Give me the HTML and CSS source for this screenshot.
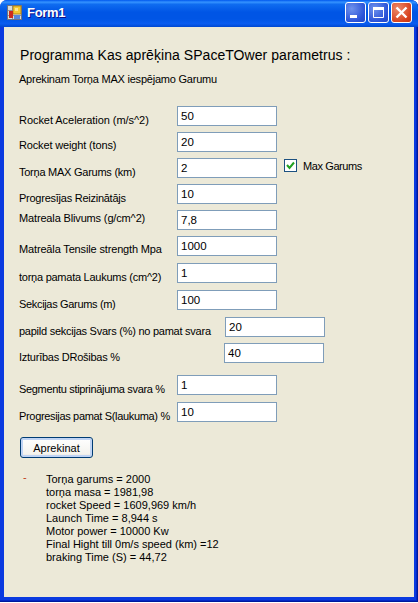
FILE: index.html
```html
<!DOCTYPE html>
<html lang="lv">
<head>
<meta charset="utf-8">
<title>Form1</title>
<link rel="stylesheet" href="styles.css">
</head>
<body>
<div class="window">
  <header class="titlebar">
    <svg class="appicon" width="15" height="15" viewBox="0 0 15 15">
      <rect x="0.5" y="0.5" width="14" height="14" fill="#dcdcd4" stroke="#6f7480"/>
      <path d="M5.5 1v13M1 5.5h4M1 10.5h13M10.5 10v4" stroke="#8c94a0" stroke-width="1" fill="none"/>
      <rect x="6" y="1" width="8" height="8" fill="#f6c832" stroke="#a87c14" stroke-width="0.8"/>
      <rect x="8" y="3" width="3" height="3" fill="#ffe88a"/>
      <rect x="2" y="6" width="4" height="7" fill="#cf2a1c"/>
      <rect x="7" y="10" width="6" height="4" fill="#5a88d8"/>
    </svg>
    <span class="title">Form1</span>
    <div class="controls">
      <button class="ctl" aria-label="Minimize"><svg width="21" height="21" viewBox="0 0 21 21"><rect x="5" y="13" width="7" height="3" fill="#fff"/></svg></button>
      <button class="ctl" aria-label="Maximize"><svg width="21" height="21" viewBox="0 0 21 21"><path d="M5.5 5.5h10v10h-10z" fill="none" stroke="#fff"/><rect x="5" y="5" width="11" height="3" fill="#fff"/></svg></button>
      <button class="ctl close" aria-label="Close"><svg width="21" height="21" viewBox="0 0 21 21"><path d="M5.5 5.5l10 10M15.5 5.5l-10 10" stroke="#fff" stroke-width="2.4" fill="none"/></svg></button>
    </div>
  </header>
  <main class="client">
    <h1 class="heading">Programma Kas aprēķina SPaceTOwer parametrus :</h1>
    <p class="sub">Aprekinam Torņa MAX iespējamo Garumu</p>

    <div class="row first"><label class="lab t1">Rocket Aceleration (m/s^2)</label><input class="field" value="50"></div>
    <div class="row"><label class="lab up1 t2">Rocket weight (tons)</label><input class="field" value="20"></div>
    <div class="row"><label class="lab t3">Torņa MAX Garums (km)</label><input class="field" value="2">
      <span class="check"><span class="box"><svg width="11" height="11" viewBox="0 0 11 11"><path d="M2 5l2.5 3L9 2.5" fill="none" stroke="#21a121" stroke-width="2"/></svg></span><span class="checklab">Max Garums</span></span>
    </div>
    <div class="row"><label class="lab t3">Progresījas Reizinātājs</label><input class="field" value="10"></div>
    <div class="row"><label class="lab top t2">Matreala Blivums (g/cm^2)</label><input class="field" value="7,8"></div>
    <div class="row"><label class="lab up1 t2">Matreāla Tensile strength Mpa</label><input class="field" value="1000"></div>
    <div class="row gap7"><label class="lab t3">torņa pamata Laukums (cm^2)</label><input class="field" value="1"></div>
    <div class="row gap7"><label class="lab t4">Sekcijas Garums (m)</label><input class="field" value="100"></div>
    <div class="row gap7 wide"><label class="lab t3">papild sekcijas Svars (%) no pamat svara</label><input class="field" value="20"></div>
    <div class="row wide2"><label class="lab t3">Izturības DRošibas %</label><input class="field" value="40"></div>
    <div class="row gap12"><label class="lab t4">Segmentu stiprinājuma svara %</label><input class="field" value="1"></div>
    <div class="row gap7"><label class="lab t4">Progresijas pamat S(laukuma) %</label><input class="field" value="10"></div>

    <button class="btn">Aprekinat</button>

    <div class="results">
      <span class="dash">-</span>
      <div class="output">
        <div>Torņa garums = 2000</div>
        <div>torņa masa = 1981,98</div>
        <div>rocket Speed = 1609,969 km/h</div>
        <div>Launch Time = 8,944 s</div>
        <div>Motor power = 10000 Kw</div>
        <div>Final Hight till 0m/s speed (km) =12</div>
        <div>braking Time (S) = 44,72</div>
      </div>
    </div>
  </main>
</div>
</body>
</html>
```
FILE: styles.css
```css
* { box-sizing: border-box; }
html, body { margin: 0; padding: 0; background: #fff; }
body { width: 418px; height: 603px; overflow: hidden; font-family: "Liberation Sans", Arial, sans-serif; font-size: 11px; color: #000; }
.window { width: 418px; height: 602px; background: #0a3ae0; box-shadow: inset -1px -1px 0 #00189c, inset -2px -2px 0 #0428c4; display: flex; flex-direction: column; border-radius: 7px 7px 0 0; overflow: hidden; }
.titlebar {
  height: 27px; flex: none; display: flex; align-items: center; padding: 0 6px 2px 7px;
  background: linear-gradient(180deg, #0058ee 0%, #3593ff 8%, #0f6cf0 16%, #0055e5 45%, #0055e5 70%, #0a5cf0 88%, #0048d0 100%);
}
.appicon { flex: none; margin-right: 5px; }
.title { color: #fff; font: bold 13px "Liberation Sans", sans-serif; letter-spacing: -0.3px; text-shadow: 1px 1px 0 #0f1089; }
.controls { margin-left: auto; display: flex; gap: 2px; }
.ctl { width: 21px; height: 21px; padding: 0; border: 1px solid #fff; border-radius: 3px; background: radial-gradient(circle at 30% 30%, #6e92ec, #2a52d8 70%, #2248c8); display: block; }
.ctl svg { display: block; margin: -1px; }
.close { background: radial-gradient(circle at 30% 30%, #ec8a6c, #d8431f 70%, #c23414); }
.client { flex: 1; margin: 0 4px 5px; background: #ece9d8; padding: 20px 0 0 15px; }
.heading { margin: 0 0 0 1px; font: 400 14px/16px "Liberation Sans", sans-serif; letter-spacing: 0.05px; }
.sub { margin: 10px 0 0; line-height: 13px; letter-spacing: -0.22px; }
.row { display: flex; align-items: flex-start; height: 20px; margin-top: 6px; }
.first { margin-top: 20px; }
.gap7 { margin-top: 7px; }
.gap12 { margin-top: 12px; }
.lab { width: 158px; flex: none; white-space: nowrap; line-height: 13px; padding-top: 8px; }
.up1 { padding-top: 7px; }
.top { padding-top: 2px; }
.wide .lab { width: 206px; }
.wide2 .lab { width: 205px; }
.t1 { letter-spacing: -0.05px; }
.t2 { letter-spacing: -0.15px; }
.t3 { letter-spacing: -0.25px; }
.t4 { letter-spacing: -0.33px; }
.field { width: 100px; height: 20px; flex: none; border: 1px solid #7f9db9; background: #fff; padding: 0 3px; font: 11.5px "Liberation Sans", sans-serif; color: #000; outline: none; }
.check { display: flex; align-items: center; margin: 1px 0 0 7px; height: 13px; }
.box { width: 13px; height: 13px; border: 1px solid #1c5180; background: #fff; display: flex; align-items: center; justify-content: center; }
.checklab { margin-left: 6px; letter-spacing: -0.4px; }
.btn { display: block; width: 73px; height: 21px; margin: 15px 0 0 1px; padding: 0; border: 1px solid #003c74; border-radius: 3px; background: linear-gradient(180deg, #fff, #f4f3ee 85%, #d6d0c5); box-shadow: inset 0 0 0 2px #c0d4f4; font: 11px "Liberation Sans", sans-serif; color: #000; }
.results { display: flex; margin-top: 15px; }
.dash { width: 23px; margin-left: 4px; flex: none; color: #c04020; line-height: 13px; margin-top: -2px; }
.output { line-height: 13px; white-space: nowrap; }
```
